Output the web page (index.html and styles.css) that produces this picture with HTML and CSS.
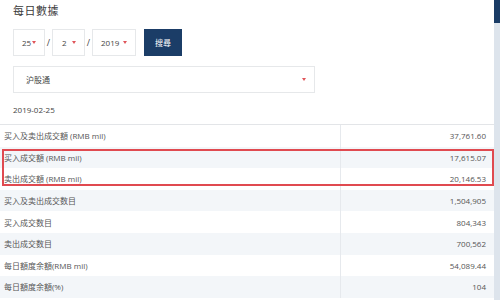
FILE: index.html
```html
<!DOCTYPE html>
<html lang="zh">
<head>
<meta charset="utf-8">
<title>每日數據</title>
<link rel="stylesheet" href="styles.css">
</head>
<body>
<div class="page">
  <main class="content">
    <h1 class="title">每日數據</h1>
    <div class="date-row">
      <div class="select sel-day"><span>25</span><i class="caret"></i></div>
      <span class="slash">/</span>
      <div class="select sel-month"><span>2</span><i class="caret"></i></div>
      <span class="slash">/</span>
      <div class="select sel-year"><span>2019</span><i class="caret"></i></div>
      <button class="search">搜尋</button>
    </div>
    <div class="select market"><span>沪股通</span><i class="caret"></i></div>
    <div class="date">2019-02-25</div>
    <div class="table">
      <div class="row"><div class="label">买入及卖出成交額 (RMB mil)</div><div class="value">37,761.60</div></div>
      <div class="row"><div class="label">买入成交額 (RMB mil)</div><div class="value">17,615.07</div></div>
      <div class="row"><div class="label">卖出成交額 (RMB mil)</div><div class="value">20,146.53</div></div>
      <div class="row"><div class="label">买入及卖出成交数目</div><div class="value">1,504,905</div></div>
      <div class="row"><div class="label">买入成交数目</div><div class="value">804,343</div></div>
      <div class="row"><div class="label">卖出成交数目</div><div class="value">700,562</div></div>
      <div class="row"><div class="label">每日額度余額(RMB mil)</div><div class="value">54,089.44</div></div>
      <div class="row"><div class="label">每日額度余額(%)</div><div class="value">104</div></div>
      <div class="highlight"></div>
    </div>
  </main>
  <aside class="rail"><div class="rail-top"></div></aside>
</div>
</body>
</html>
```

FILE: styles.css
```css
* { box-sizing: border-box; }
html, body { margin: 0; padding: 0; background: #fff; }
body {
  font-family: "Open Sans", "Noto Sans CJK SC", sans-serif;
  color: #555;
  font-size: 8px;
}
.page {
  display: flex;
  width: 500px;
  height: 300px;
  overflow: hidden;
}
.content {
  flex: 1;
  display: flex;
  flex-direction: column;
}
.rail {
  width: 6px;
  background: #dde4ec;
}
.rail-top {
  height: 23px;
  background: #1a3c66;
}
.title {
  margin: 3px 0 0 13px;
  font-size: 11px;
  font-weight: normal;
  line-height: 16px;
  color: #3a3a3a;
  letter-spacing: 0.5px;
}
.date-row {
  display: flex;
  align-items: center;
  margin: 10px 0 0 13px;
  height: 27px;
}
.select {
  display: flex;
  align-items: center;
  justify-content: space-between;
  height: 27px;
  border: 1px solid #e6e8ea;
  background: #fff;
  color: #444;
  padding: 0 8px 0 8px;
}
.sel-day { width: 32px; }
.sel-month { width: 33px; padding-left: 9px; }
.sel-year { width: 44px; }
.caret {
  width: 0;
  height: 0;
  border-left: 2px solid transparent;
  border-right: 2px solid transparent;
  border-top: 3px solid #e0555a;
}
.slash {
  width: 7px;
  text-align: center;
  color: #444;
  font-size: 9px;
}
.search {
  margin-left: 8px;
  width: 38px;
  height: 27px;
  border: 0;
  background: #1b3d67;
  color: #fff;
  font-family: "Noto Sans CJK SC", sans-serif;
  font-size: 8px;
  padding: 0;
}
.market {
  margin: 10px 0 0 13px;
  width: 302px;
  padding: 0 8px 0 12px;
}
.date {
  margin: 12px 0 0 13px;
  line-height: 10px;
  color: #444;
}
.table {
  position: relative;
  margin-top: 9px;
  border-top: 1px solid #e3e5e8;
}
.row {
  display: grid;
  grid-template-columns: 340px 1fr;
  height: 21.6px;
  align-items: stretch;
}
.row:nth-child(even) { background: #f3f6f9; }
.label {
  display: flex;
  align-items: center;
  padding-left: 4px;
  color: #555;
}
.value {
  display: flex;
  align-items: center;
  justify-content: flex-end;
  padding-right: 8px;
  border-left: 1px solid #e6e9ed;
  color: #555;
}
.highlight {
  position: absolute;
  left: 2px;
  right: 0;
  top: 24px;
  height: 37px;
  border: 2px solid #e04a50;
  pointer-events: none;
}
```
